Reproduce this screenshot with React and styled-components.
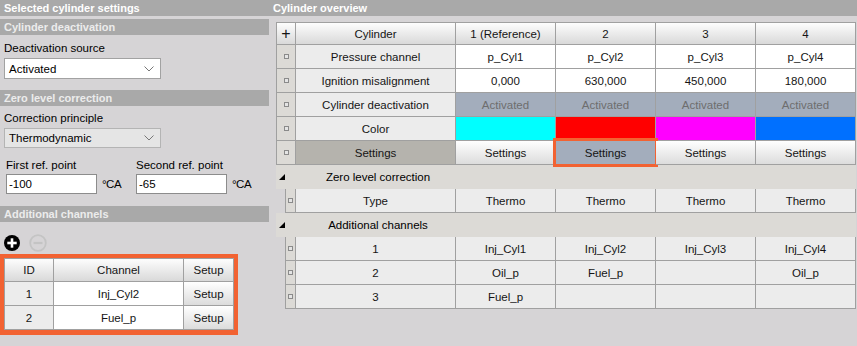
import React from "react";
import styled, { createGlobalStyle, css } from "styled-components";

const Global = createGlobalStyle`
  html, body { margin: 0; padding: 0; }
  body {
    width: 857px; height: 346px; overflow: hidden;
    background: #d6d4d6;
    font-family: Tahoma, "Liberation Sans", Arial, sans-serif;
    font-size: 11.5px; color: #000;
  }
  * { box-sizing: border-box; }
`;

const Page = styled.div`
  display: flex;
  width: 857px;
  height: 346px;
`;

const LeftPanel = styled.div`
  width: 270px;
  display: flex;
  flex-direction: column;
`;

const RightPanel = styled.div`
  flex: 1;
  display: flex;
  flex-direction: column;
`;

const TitleBar = styled.div`
  height: 16px;
  background: #a9a9a9;
  color: #fff;
  font-weight: bold;
  font-size: 11px;
  line-height: 16px;
  padding-left: ${(p) => (p.$right ? 3 : 4)}px;
  white-space: nowrap;
  width: ${(p) => (p.$right ? "auto" : "270px")};
`;

const SectionBar = styled.div`
  height: 16px;
  width: 269px;
  margin-top: ${(p) => p.$top}px;
  background: #a9a9a9;
  color: #ececec;
  font-weight: bold;
  font-size: 11px;
  line-height: 16px;
  padding-left: 4px;
`;

const Label = styled.div`
  margin-top: ${(p) => p.$top || 0}px;
  height: 16px;
  line-height: 16px;
  padding-left: 4px;
  white-space: nowrap;
`;

const Select = styled.div`
  margin: 2px 0 0 4px;
  width: 157px;
  height: ${(p) => p.$h}px;
  border: 1px solid ${(p) => (p.$disabled ? "#b4b4b4" : "#a2a2a2")};
  background: ${(p) => (p.$disabled ? "#e5e5e5" : "#fff")};
  display: flex;
  align-items: center;
  justify-content: space-between;
  padding: 0 6px 0 4px;
`;

const RefRow = styled.div`
  display: flex;
  margin-top: 9px;
  padding-left: 6px;
`;

const RefGroup = styled.div`
  display: flex;
  flex-direction: column;
  width: ${(p) => p.$w}px;
`;

const RefLabel = styled.div`
  height: 16px;
  line-height: 16px;
  white-space: nowrap;
`;

const InputLine = styled.div`
  display: flex;
  align-items: center;
  margin-top: 1px;
  gap: 5px;
`;

const TextInput = styled.div`
  width: 91px;
  height: 20px;
  border: 1px solid #8c8c8c;
  background: #fff;
  line-height: 18px;
  padding-left: 2px;
`;

const Unit = styled.span`
  white-space: nowrap;
  letter-spacing: -0.5px;
`;

const IconRow = styled.div`
  display: flex;
  gap: 9px;
  padding-left: 4px;
  margin-top: 12px;
  height: 18px;
  align-items: center;
`;

const OrangeFrame = styled.div`
  margin-top: 2px;
  width: 238px;
  border: 4px solid #f26232;
  border-bottom-width: 5px;
  background: #f26232;
`;

const ChannelGrid = styled.div`
  display: grid;
  grid-template-columns: 50px 130px 50px;
  background: #d6d4d6;
`;

const baseCell = css`
  height: 24px;
  display: flex;
  align-items: center;
  justify-content: center;
  border-right: 1px solid #a0a0a0;
  border-bottom: 1px solid #a0a0a0;
  white-space: nowrap;
  color: #151515;
`;

const HeadCell = styled.div`
  ${baseCell};
  height: ${(p) => p.$h || 24}px;
  background: linear-gradient(#fdfdfd, #d9d9d9);
  border-top: ${(p) => (p.$top ? "1px solid #a0a0a0" : "none")};
  border-left: ${(p) => (p.$first ? "1px solid #a0a0a0" : "none")};
  font-size: ${(p) => (p.$plus ? 16 : 11.5)}px;
`;

const Cell = styled.div`
  ${baseCell};
  background: ${(p) => p.$bg || "#ececec"};
  color: ${(p) => p.$fg || "#151515"};
  border-left: ${(p) => (p.$first ? "1px solid #a0a0a0" : "none")};
`;

const ButtonCell = styled.div`
  ${baseCell};
  background: ${(p) => (p.$active ? "#a3adbc" : "linear-gradient(#ffffff, #dcdcdc)")};
  position: relative;
`;

const Highlight = styled.div`
  position: absolute;
  left: -3px;
  right: -3px;
  top: -3px;
  bottom: -3px;
  border: 3px solid #f26232;
  pointer-events: none;
`;

const TableWrap = styled.div`
  margin: 6px 0 0 6px;
  width: 580px;
`;

const OverviewGrid = styled.div`
  display: grid;
  grid-template-columns: 20px 160px repeat(4, 100px);
`;

const GroupRow = styled.div`
  height: 24px;
  width: 580px;
  background: #dcdad6;
  display: grid;
  grid-template-columns: 20px 160px 1fr;
  align-items: center;
`;

const GroupArrowBox = styled.span`
  display: flex;
  padding-left: 3px;
`;

const GroupText = styled.span`
  text-align: center;
  white-space: nowrap;
  padding-left: 4px;
`;

const NestedGrid = styled.div`
  display: grid;
  margin-left: 9px;
  grid-template-columns: 11px 160px repeat(4, 100px);
`;

const BulletCell = styled.div`
  ${baseCell};
  background: #dcdad6;
  border-left: 1px solid #a0a0a0;
`;

const Bullet = styled.span`
  width: 5px;
  height: 5px;
  border: 1px solid #8a8a8a;
  background: #e4e4e4;
`;

const Chevron = () => (
  <svg width="10" height="6" viewBox="0 0 10 6">
    <polyline points="0.5,0.5 5,5 9.5,0.5" fill="none" stroke="#777" strokeWidth="1" />
  </svg>
);

const PlusIcon = () => (
  <svg width="16" height="16" viewBox="0 0 16 16">
    <circle cx="8" cy="8" r="8" fill="#000" />
    <rect x="3.3" y="6.7" width="9.4" height="2.6" fill="#fff" />
    <rect x="6.7" y="3.3" width="2.6" height="9.4" fill="#fff" />
  </svg>
);

const MinusIcon = () => (
  <svg width="18" height="18" viewBox="0 0 18 18">
    <circle cx="9" cy="9" r="7.8" fill="none" stroke="#c4c4c4" strokeWidth="1.8" />
    <rect x="4.5" y="7.9" width="9" height="2.2" fill="#c4c4c4" />
  </svg>
);

const GroupArrow = () => (
  <svg width="6" height="6" viewBox="0 0 6 6">
    <polygon points="6,0 6,6 0,6" fill="#000" />
  </svg>
);

const cols = ["1 (Reference)", "2", "3", "4"];

const Group = ({ title }) => (
  <GroupRow>
    <GroupArrowBox>
      <GroupArrow />
    </GroupArrowBox>
    <GroupText>{title}</GroupText>
  </GroupRow>
);

export default function App() {
  return (
    <Page>
      <Global />
      <LeftPanel>
        <TitleBar>Selected cylinder settings</TitleBar>
        <SectionBar $top={3}>Cylinder deactivation</SectionBar>
        <Label $top={5}>Deactivation source</Label>
        <Select $h={21}>
          <span>Activated</span>
          <Chevron />
        </Select>
        <SectionBar $top={11}>Zero level correction</SectionBar>
        <Label $top={4}>Correction principle</Label>
        <Select $h={20} $disabled>
          <span>Thermodynamic</span>
          <Chevron />
        </Select>
        <RefRow>
          <RefGroup $w={130}>
            <RefLabel>First ref. point</RefLabel>
            <InputLine>
              <TextInput>-100</TextInput>
              <Unit>°CA</Unit>
            </InputLine>
          </RefGroup>
          <RefGroup $w={130}>
            <RefLabel>Second ref. point</RefLabel>
            <InputLine>
              <TextInput>-65</TextInput>
              <Unit>°CA</Unit>
            </InputLine>
          </RefGroup>
        </RefRow>
        <SectionBar $top={12}>Additional channels</SectionBar>
        <IconRow>
          <PlusIcon />
          <MinusIcon />
        </IconRow>
        <OrangeFrame>
          <ChannelGrid>
            <HeadCell $top $first>ID</HeadCell>
            <HeadCell $top>Channel</HeadCell>
            <HeadCell $top>Setup</HeadCell>
            <Cell $first>1</Cell>
            <Cell $bg="#fff">Inj_Cyl2</Cell>
            <ButtonCell>Setup</ButtonCell>
            <Cell $first>2</Cell>
            <Cell $bg="#fff">Fuel_p</Cell>
            <ButtonCell>Setup</ButtonCell>
          </ChannelGrid>
        </OrangeFrame>
      </LeftPanel>
      <RightPanel>
        <TitleBar $right>Cylinder overview</TitleBar>
        <TableWrap>
          <OverviewGrid>
            <HeadCell $top $first $plus $h={23}>+</HeadCell>
            <HeadCell $top $h={23}>Cylinder</HeadCell>
            {cols.map((c) => (
              <HeadCell $top $h={23} key={c}>{c}</HeadCell>
            ))}

            <BulletCell><Bullet /></BulletCell>
            <Cell>Pressure channel</Cell>
            {["p_Cyl1", "p_Cyl2", "p_Cyl3", "p_Cyl4"].map((v) => (
              <Cell $bg="#fff" key={v}>{v}</Cell>
            ))}

            <BulletCell><Bullet /></BulletCell>
            <Cell>Ignition misalignment</Cell>
            {["0,000", "630,000", "450,000", "180,000"].map((v) => (
              <Cell $bg="#fff" key={v}>{v}</Cell>
            ))}

            <BulletCell><Bullet /></BulletCell>
            <Cell>Cylinder deactivation</Cell>
            {[1, 2, 3, 4].map((i) => (
              <Cell $bg="#a3adbc" $fg="#6e6e6e" key={i}>Activated</Cell>
            ))}

            <BulletCell><Bullet /></BulletCell>
            <Cell>Color</Cell>
            {["#00ffff", "#ff0000", "#ff00ff", "#0070ff"].map((c) => (
              <Cell $bg={c} key={c} />
            ))}

            <BulletCell><Bullet /></BulletCell>
            <Cell $bg="#b5b3ad">Settings</Cell>
            {[1, 2, 3, 4].map((i) => (
              <ButtonCell $active={i === 2} key={i}>
                Settings
                {i === 2 && <Highlight />}
              </ButtonCell>
            ))}
          </OverviewGrid>

          <Group title="Zero level correction" />
          <NestedGrid>
            <BulletCell><Bullet /></BulletCell>
            <Cell>Type</Cell>
            {[1, 2, 3, 4].map((i) => (
              <Cell key={i}>Thermo</Cell>
            ))}
          </NestedGrid>

          <Group title="Additional channels" />
          <NestedGrid>
            {[
              ["1", "Inj_Cyl1", "Inj_Cyl2", "Inj_Cyl3", "Inj_Cyl4"],
              ["2", "Oil_p", "Fuel_p", "", "Oil_p"],
              ["3", "Fuel_p", "", "", ""],
            ].map((row) => (
              <React.Fragment key={row[0]}>
                <BulletCell><Bullet /></BulletCell>
                {row.map((v, j) => (
                  <Cell key={j}>{v}</Cell>
                ))}
              </React.Fragment>
            ))}
          </NestedGrid>
        </TableWrap>
      </RightPanel>
    </Page>
  );
}
